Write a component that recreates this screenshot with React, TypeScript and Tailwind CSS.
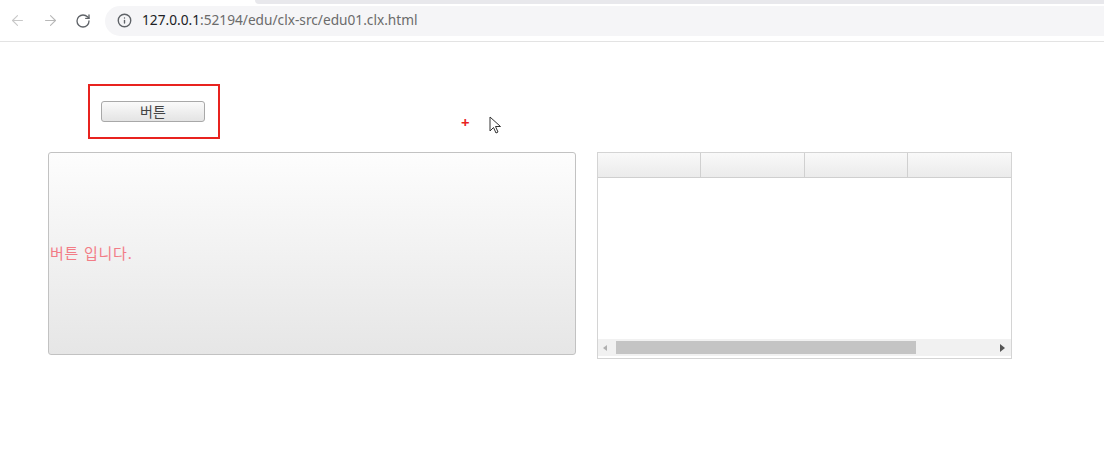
import { RotateCw, ArrowLeft, ArrowRight, Info } from "lucide-react";

const font = { fontFamily: '"Noto Sans", "Noto Sans CJK KR", sans-serif' };

function Toolbar() {
  return (
    <div className="relative h-[42px] border-b border-[#e3e3e3] bg-white">
      {/* tab strip remnant */}
      <div className="absolute left-[255px] right-0 top-0 h-[4px] rounded-bl-[6px] bg-[#e8e8ec]" />
      <div className="flex h-full items-center">
        <div className="flex w-[105px] items-center pl-[9px]">
          <ArrowLeft size={17} strokeWidth={1.5} className="text-[#c8c8c8]" />
          <ArrowRight size={17} strokeWidth={1.5} className="ml-[16px] text-[#b8b8b8]" />
          <RotateCw size={16} strokeWidth={2} className="ml-[16px] text-[#5f6368]" />
        </div>
        <div className="flex h-[30px] flex-1 items-center rounded-l-full bg-[#f5f5f7] pl-[12px]">
          <Info size={15} strokeWidth={2.2} className="text-[#5f6368]" />
          <span className="ml-[10px] text-[13.7px] text-[#202124]" style={font}>
            127.0.0.1
            <span className="text-[#6b6b6b]">:52194/edu/clx-src/edu01.clx.html</span>
          </span>
        </div>
      </div>
    </div>
  );
}

function Grid() {
  return (
    <div className="ml-[21px] mt-[110px] flex h-[207px] w-[415px] flex-col border border-[#d4d4d4] bg-white">
      <div className="grid h-[25px] grid-cols-4 border-b border-[#cfcfcf]">
        {[0, 1, 2, 3].map((i) => (
          <div
            key={i}
            className="border-r border-[#d0d0d0] bg-gradient-to-b from-[#f9f9f9] to-[#ebebeb] last:border-r-0"
          />
        ))}
      </div>
      <div className="flex-1" />
      <div className="mb-[2px] flex h-[17px] items-center bg-[#f1f1f1]">
        <span className="ml-[5px] h-0 w-0 border-y-[3px] border-r-[4px] border-y-transparent border-r-[#b0b0b0]" />
        <div className="ml-[9px] h-[13px] w-[300px] bg-[#c4c4c4]" />
        <div className="flex-1" />
        <span className="mr-[6px] h-0 w-0 border-y-[4px] border-l-[5px] border-y-transparent border-l-[#555]" />
      </div>
    </div>
  );
}

export default function App() {
  return (
    <div className="relative h-[466px] w-[1104px] overflow-hidden bg-white" style={font}>
      <Toolbar />
      <div className="flex pl-[48px]">
        <div className="flex flex-col">
          <div className="ml-[40px] mt-[42px] flex h-[55px] w-[132px] items-center border-2 border-[#e8231f] pl-[11px]">
            <button className="h-[21px] w-[104px] rounded-[3px] border border-[#a8a8a8] bg-gradient-to-b from-[#fafafa] to-[#e4e4e4] text-[14px] leading-none text-[#444]">
              버튼
            </button>
          </div>
          <div className="mt-[13px] flex h-[203px] w-[528px] items-center rounded-[3px] border border-[#c2c2c2] bg-gradient-to-b from-[#fdfdfd] to-[#e6e6e6]">
            <span className="ml-[1px] text-[15px] tracking-[0.8px] text-[#f27c86]">버튼 입니다.</span>
          </div>
        </div>
        <Grid />
      </div>
      {/* red cross marker and mouse cursor */}
      <span className="absolute left-[461px] top-[115px] text-[15px] font-bold leading-none text-[#e8231f]">+</span>
      <svg className="absolute left-[489px] top-[116px]" width="13" height="19" viewBox="0 0 13 19">
        <path d="M1 1 L1 15 L4.5 11.5 L7 17 L9 16 L6.5 10.5 L11.5 10.5 Z" fill="#fff" stroke="#333" strokeWidth="1" />
      </svg>
    </div>
  );
}
